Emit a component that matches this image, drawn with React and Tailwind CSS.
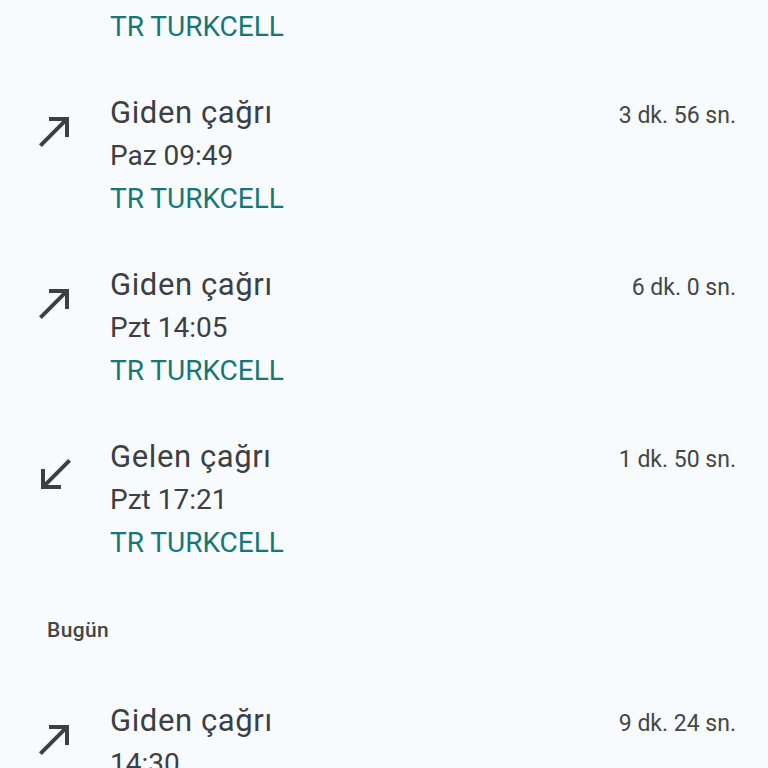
import React from 'react';

const OutIcon = () => (
  <svg width="48" height="48" viewBox="0 0 24 24" className="fill-[#3c4043]">
    <path d="M9 5v2h6.59L4 18.59 5.41 20 17 8.41V15h2V5z" />
  </svg>
);

const InIcon = () => (
  <svg width="48" height="48" viewBox="0 0 24 24" className="fill-[#3c4043]">
    <path d="M20 5.41L18.59 4 7 15.59V9H5v10h10v-2H8.41z" />
  </svg>
);

const calls = [
  { type: 'out', title: 'Giden çağrı', time: 'Çar 18:12', duration: '2 dk. 10 sn.' },
  { type: 'out', title: 'Giden çağrı', time: 'Paz 09:49', duration: '3 dk. 56 sn.' },
  { type: 'out', title: 'Giden çağrı', time: 'Pzt 14:05', duration: '6 dk. 0 sn.' },
  { type: 'in', title: 'Gelen çağrı', time: 'Pzt 17:21', duration: '1 dk. 50 sn.' },
];

const today = [{ type: 'out', title: 'Giden çağrı', time: '14:30', duration: '9 dk. 24 sn.' }];

const CallRow = ({ call }) => (
  <div className="flex items-start pl-[31px] pr-[32px] pt-[22px] pb-[21px]">
    <div className="mt-[16px] shrink-0">{call.type === 'out' ? <OutIcon /> : <InIcon />}</div>
    <div className="ml-[31px] flex-1 min-w-0">
      <div className="text-[31px] leading-[44px] tracking-[0.6px] text-[#3c4043]">{call.title}</div>
      <div className="text-[28px] leading-[42px] text-[#3c4043]">{call.time}</div>
      <div className="text-[28px] leading-[43px] text-[#167775]">TR TURKCELL</div>
    </div>
    <div className="pt-[3px] text-[23px] leading-[44px] text-[#444746]">{call.duration}</div>
  </div>
);

export default function App() {
  return (
    <div
      className="h-[768px] w-[768px] overflow-hidden bg-[#f8fbfe]"
      style={{ fontFamily: 'Roboto, "Noto Sans", sans-serif' }}
    >
      <div className="-mt-[103px]">
        {calls.map((c, i) => (
          <CallRow key={i} call={c} />
        ))}
        <div className="flex h-[92px] items-center pl-[47px] text-[21px] font-medium tracking-[0.4px] text-[#444746]">
          Bugün
        </div>
        {today.map((c, i) => (
          <CallRow key={i} call={c} />
        ))}
      </div>
    </div>
  );
}
